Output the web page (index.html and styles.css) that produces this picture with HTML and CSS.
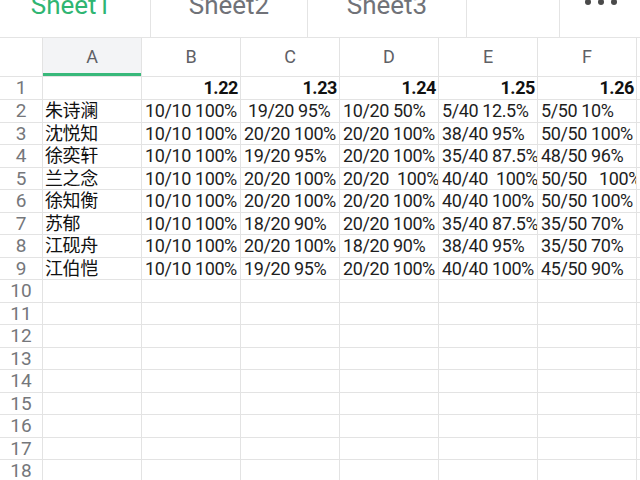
FILE: index.html
```html
<!DOCTYPE html>
<html lang="zh">
<head>
<meta charset="utf-8">
<title>Sheet1</title>
<link rel="stylesheet" href="styles.css">
</head>
<body>
<div class="tabbar">
  <div class="tab tab-1 active"><span class="tab-label">Sheet1</span></div>
  <div class="tab tab-2"><span class="tab-label">Sheet2</span></div>
  <div class="tab tab-3"><span class="tab-label">Sheet3</span></div>
  <div class="tab tab-spacer"></div>
  <div class="tab tab-more"><i class="dot"></i><i class="dot"></i><i class="dot"></i></div>
</div>
<div class="sheet">
  <div class="cell corner"></div>
  <div class="cell colhead selected">A</div>
  <div class="cell colhead">B</div>
  <div class="cell colhead">C</div>
  <div class="cell colhead">D</div>
  <div class="cell colhead">E</div>
  <div class="cell colhead">F</div>
  <div class="cell colhead">G</div>

  <div class="cell rowhead">1</div>
  <div class="cell"></div>
  <div class="cell num">1.22</div>
  <div class="cell num">1.23</div>
  <div class="cell num">1.24</div>
  <div class="cell num">1.25</div>
  <div class="cell num">1.26</div>
  <div class="cell"></div>

  <div class="cell rowhead">2</div>
  <div class="cell name">朱诗澜</div>
  <div class="cell">10/10 100%</div>
  <div class="cell"> 19/20 95%</div>
  <div class="cell">10/20 50%</div>
  <div class="cell">5/40 12.5%</div>
  <div class="cell">5/50 10%</div>
  <div class="cell"></div>

  <div class="cell rowhead">3</div>
  <div class="cell name">沈悦知</div>
  <div class="cell">10/10 100%</div>
  <div class="cell">20/20 100%</div>
  <div class="cell">20/20 100%</div>
  <div class="cell">38/40 95%</div>
  <div class="cell">50/50 100%</div>
  <div class="cell"></div>

  <div class="cell rowhead">4</div>
  <div class="cell name">徐奕轩</div>
  <div class="cell">10/10 100%</div>
  <div class="cell">19/20 95%</div>
  <div class="cell">20/20 100%</div>
  <div class="cell">35/40 87.5%</div>
  <div class="cell">48/50 96%</div>
  <div class="cell"></div>

  <div class="cell rowhead">5</div>
  <div class="cell name">兰之念</div>
  <div class="cell">10/10 100%</div>
  <div class="cell">20/20 100%</div>
  <div class="cell">20/20  100%</div>
  <div class="cell">40/40  100%</div>
  <div class="cell">50/50   100%</div>
  <div class="cell"></div>

  <div class="cell rowhead">6</div>
  <div class="cell name">徐知衡</div>
  <div class="cell">10/10 100%</div>
  <div class="cell">20/20 100%</div>
  <div class="cell">20/20 100%</div>
  <div class="cell">40/40 100%</div>
  <div class="cell">50/50 100%</div>
  <div class="cell"></div>

  <div class="cell rowhead">7</div>
  <div class="cell name">苏郁</div>
  <div class="cell">10/10 100%</div>
  <div class="cell">18/20 90%</div>
  <div class="cell">20/20 100%</div>
  <div class="cell">35/40 87.5%</div>
  <div class="cell">35/50 70%</div>
  <div class="cell"></div>

  <div class="cell rowhead">8</div>
  <div class="cell name">江砚舟</div>
  <div class="cell">10/10 100%</div>
  <div class="cell">20/20 100%</div>
  <div class="cell">18/20 90%</div>
  <div class="cell">38/40 95%</div>
  <div class="cell">35/50 70%</div>
  <div class="cell"></div>

  <div class="cell rowhead">9</div>
  <div class="cell name">江伯恺</div>
  <div class="cell">10/10 100%</div>
  <div class="cell">19/20 95%</div>
  <div class="cell">20/20 100%</div>
  <div class="cell">40/40 100%</div>
  <div class="cell">45/50 90%</div>
  <div class="cell"></div>

  <div class="cell rowhead">10</div><div class="cell"></div><div class="cell"></div><div class="cell"></div><div class="cell"></div><div class="cell"></div><div class="cell"></div><div class="cell"></div>
  <div class="cell rowhead">11</div><div class="cell"></div><div class="cell"></div><div class="cell"></div><div class="cell"></div><div class="cell"></div><div class="cell"></div><div class="cell"></div>
  <div class="cell rowhead">12</div><div class="cell"></div><div class="cell"></div><div class="cell"></div><div class="cell"></div><div class="cell"></div><div class="cell"></div><div class="cell"></div>
  <div class="cell rowhead">13</div><div class="cell"></div><div class="cell"></div><div class="cell"></div><div class="cell"></div><div class="cell"></div><div class="cell"></div><div class="cell"></div>
  <div class="cell rowhead">14</div><div class="cell"></div><div class="cell"></div><div class="cell"></div><div class="cell"></div><div class="cell"></div><div class="cell"></div><div class="cell"></div>
  <div class="cell rowhead">15</div><div class="cell"></div><div class="cell"></div><div class="cell"></div><div class="cell"></div><div class="cell"></div><div class="cell"></div><div class="cell"></div>
  <div class="cell rowhead">16</div><div class="cell"></div><div class="cell"></div><div class="cell"></div><div class="cell"></div><div class="cell"></div><div class="cell"></div><div class="cell"></div>
  <div class="cell rowhead">17</div><div class="cell"></div><div class="cell"></div><div class="cell"></div><div class="cell"></div><div class="cell"></div><div class="cell"></div><div class="cell"></div>
  <div class="cell rowhead">18</div><div class="cell"></div><div class="cell"></div><div class="cell"></div><div class="cell"></div><div class="cell"></div><div class="cell"></div><div class="cell"></div>
</div>
</body>
</html>
```
FILE: styles.css
```css
html, body {
  margin: 0;
  padding: 0;
  background: #ffffff;
  overflow: hidden;
  width: 640px;
  height: 480px;
}

body {
  font-family: Roboto, "Noto Sans CJK SC", sans-serif;
}

.tabbar {
  display: flex;
  height: 38px;
  box-sizing: border-box;
  border-bottom: 1px solid #e4e4e4;
  overflow: hidden;
}

.tab {
  box-sizing: border-box;
  border-right: 1px solid #e4e4e4;
  display: flex;
  justify-content: center;
  align-items: flex-start;
  flex: none;
}

.tab-1 { width: 151px; padding-right: 8px; }
.tab-2 { width: 157px; }
.tab-3 { width: 159px; }
.tab-spacer { width: 93px; }
.tab-more {
  flex: 1;
  border-right: none;
  gap: 7px;
  margin-top: -1px;
  padding-left: 2px;
}

.tab-label {
  font-size: 26px;
  line-height: 26px;
  margin-top: -8px;
  color: #707278;
  font-weight: 400;
}

.tab.active .tab-label {
  color: #2fb572;
}

.dot {
  display: block;
  width: 6px;
  height: 6px;
  border-radius: 50%;
  background: #4a4a4a;
}

.sheet {
  display: grid;
  grid-template-columns: 43px repeat(7, 99px);
  grid-template-rows: 39px 23px repeat(17, 22.5px);
  width: 640px;
  height: 442px;
  overflow: hidden;
}

.cell {
  box-sizing: border-box;
  border-right: 1px solid #e3e3e3;
  border-bottom: 1px solid #e3e3e3;
  font-size: 18px;
  letter-spacing: -0.4px;
  line-height: 22px;
  color: #1e1e1e;
  white-space: pre;
  overflow: hidden;
  padding-left: 3px;
}

.colhead {
  color: #5f6166;
  font-size: 18px;
  letter-spacing: 0;
  text-align: center;
  line-height: 38px;
  padding-left: 0;
}

.colhead.selected {
  background: #f3f4f6;
  box-shadow: inset 0 -3px 0 #38b87a;
}

.rowhead {
  color: #75777b;
  font-size: 19px;
  letter-spacing: 0;
  text-align: center;
  padding-left: 0;
}

.num {
  font-weight: 700;
  text-align: right;
  padding-left: 0;
  padding-right: 2px;
  color: #111;
}

.name {
  color: #111;
  padding-left: 2px;
}
```
